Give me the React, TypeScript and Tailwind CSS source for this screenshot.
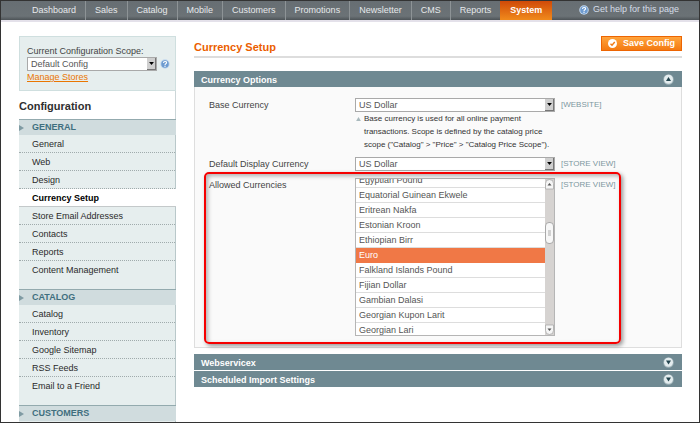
import { useEffect, useRef, type ReactNode } from "react";

const tabs = ["Dashboard", "Sales", "Catalog", "Mobile", "Customers", "Promotions", "Newsletter", "CMS", "Reports"];

const sections = [
  {
    title: "GENERAL",
    items: ["General", "Web", "Design", "Currency Setup", "Store Email Addresses", "Contacts", "Reports", "Content Management"],
  },
  { title: "CATALOG", items: ["Catalog", "Inventory", "Google Sitemap", "RSS Feeds", "Email to a Friend"] },
  { title: "CUSTOMERS", items: [] },
];

const currencies = [
  "Egyptian Pound",
  "Equatorial Guinean Ekwele",
  "Eritrean Nakfa",
  "Estonian Kroon",
  "Ethiopian Birr",
  "Euro",
  "Falkland Islands Pound",
  "Fijian Dollar",
  "Gambian Dalasi",
  "Georgian Kupon Larit",
  "Georgian Lari",
];

function HelpIcon() {
  return (
    <svg viewBox="0 0 20 20" className="size-[10px] shrink-0" aria-hidden="true">
      <circle cx="10" cy="10" r="9.5" fill="#c3d8ee" />
      <circle cx="10" cy="10" r="7.5" fill="#6e9bd0" />
      <path d="M7 8c0-4 6.200-4 6.200-.6 0 2.200-3.100 2.200-3.100 4.400" fill="none" stroke="#fff" strokeWidth="2.200" />
      <circle cx="10" cy="14.600" r="1.400" fill="#fff" />
    </svg>
  );
}

function ToggleIcon({ open }: { open?: boolean }) {
  return (
    <svg viewBox="0 0 22 22" className="size-[11px]" aria-hidden="true">
      <circle cx="11" cy="11" r="10.500" fill="#9fb3b9" />
      <circle cx="11" cy="10.500" r="9" fill="#e3ecee" />
      <path d={open ? "M11 6l5 8H6z" : "M11 15l5-8H6z"} fill="#23454f" />
    </svg>
  );
}

function DropDown({ id, value }: { id: string; value: string }) {
  return (
    <div className="relative min-w-0 flex-1">
      <select
        id={id}
        className="block h-[14px] w-full appearance-none border border-[#a9a9a9] bg-white pl-[3px] text-[9px] leading-[12px] text-[#555]"
      >
        <option>{value}</option>
      </select>
      <span className="pointer-events-none absolute inset-y-px right-px flex w-[9px] items-center justify-center border-r border-b border-[#777] bg-[#cfcfcf]">
        <svg viewBox="0 0 8 5" className="h-[3px] w-[5px]" aria-hidden="true">
          <path d="M0 0h8L4 5z" fill="#000" />
        </svg>
      </span>
    </div>
  );
}

function Row({ id, label, scope, children }: { id: string; label: string; scope: string; children: ReactNode }) {
  return (
    <div className="grid grid-cols-[146px_200px_1fr]">
      <label htmlFor={id} className="leading-[14px]">
        {label}
      </label>
      <div>{children}</div>
      <span className="pl-[6px] text-[8px] leading-[14px] text-[#7d979f]">[{scope}]</span>
    </div>
  );
}

function CurrencyList() {
  const list = useRef<HTMLSelectElement>(null);
  useEffect(() => {
    if (list.current) list.current.scrollTop = 6;
  }, []);
  return (
    <div className="flex border border-[#b5b5b5] bg-white">
      <select
        id="allowed"
        multiple
        size={10}
        ref={list}
        defaultValue={["Euro"]}
        className="block h-[156px] min-w-0 flex-1 appearance-none overflow-y-scroll border-0 bg-white p-0 text-[9px] text-[#555] outline-none [scrollbar-width:none]"
      >
        {currencies.map((name) => (
          <option
            key={name}
            className="h-[15px] min-h-[15px] border-b border-[#ddd] p-0 pt-[2px] pl-[3px] leading-[12px] checked:border-[#f07846] checked:bg-[linear-gradient(#f07846,#f07846)] checked:text-white"
          >
            {name}
          </option>
        ))}
      </select>
      <svg viewBox="0 0 9 156" className="h-[156px] w-[9px]" aria-hidden="true">
        <rect width="9" height="156" fill="#d6d3d1" />
        <path d="M.5 10V4.500a4 4 0 0 1 8 0V10z" fill="#f5f5f5" stroke="#aaa" strokeWidth=".8" />
        <path d="M2.500 6.500h4l-2-2.500z" fill="#555" />
        <rect x=".5" y="43.500" width="8" height="21" rx="3.500" fill="#f7f7f7" stroke="#999" strokeWidth=".8" />
        <path d="M3 52h3M3 54h3M3 56h3" stroke="#999" strokeWidth=".8" />
        <path d="M.5 146v5.500a4 4 0 0 0 8 0V146z" fill="#f5f5f5" stroke="#aaa" strokeWidth=".8" />
        <path d="M2.500 149.500h4l-2 2.500z" fill="#555" />
      </svg>
    </div>
  );
}

function SectionBar({ title, open }: { title: string; open?: boolean }) {
  return (
    <button
      type="button"
      aria-expanded={!!open}
      className="flex h-4 w-full items-center justify-between bg-[#6f8992] pr-2 pl-[7px] text-[9px] font-bold text-white"
    >
      <span className="pt-[2px] leading-[14px]">{title}</span>
      <ToggleIcon open={open} />
    </button>
  );
}

export default function App() {
  return (
    <div className="flex h-screen flex-col overflow-hidden border border-[#333] bg-white font-['Liberation_Sans',Arial,sans-serif] text-[9px] text-[#444]">
      <header className="flex h-[21px] shrink-0 items-stretch border-b-2 border-[#e4e1ea] bg-[linear-gradient(#676e73,#6b7276_80%,#4d5357)] pr-5 pl-[22px] text-[#e6e9eb]">
        <nav className="flex">
          {tabs.map((tab) => (
            <a key={tab} href="#" className="flex items-center border-r border-[#8d9396] px-[9px] last-of-type:border-0">
              {tab}
            </a>
          ))}
        </nav>
        <a href="#" className="flex items-center bg-[linear-gradient(#d04a08,#f08a1c)] px-[10px] font-bold text-white">
          System
        </a>
        <a href="#" className="ml-auto flex items-center gap-1 pb-[2px] text-[#d5dde8]">
          <HelpIcon />
          Get help for this page
        </a>
      </header>

      <div className="flex min-h-0 flex-1 pr-[17px] pl-[18px]">
        <aside className="w-[157px] shrink-0 pt-[14px]">
          <div className="h-[55px] border border-[#cfdfdf] bg-[#e6eeee] pt-2 pl-[7px]">
            <label htmlFor="scope" className="block leading-[12px]">
              Current Configuration Scope:
            </label>
            <div className="flex items-center gap-[3px] pr-[5px]">
              <DropDown id="scope" value="Default Config" />
              <HelpIcon />
            </div>
            <a href="#" className="block leading-[12px] text-[#ea7601] underline">
              Manage Stores
            </a>
          </div>
          <h2 className="h-7 border-r border-[#ccd6d8] pt-2 text-[11px] leading-[14px] font-bold text-[#2f2f2f]">Configuration</h2>
          {sections.map((section) => (
            <section key={section.title} className="bg-[#e6eeee]">
              <h3 className="flex h-4 items-center border-t border-[#93aaae] bg-[#d0dcde] font-bold text-[#3f6f7e]">
                <svg viewBox="0 0 5 6" className="mr-2 h-[6px] w-[5px]" aria-hidden="true">
                  <path d="M0 0l5 3-5 3z" fill="#7f9ba3" />
                </svg>
                {section.title}
              </h3>
              <ul className="border-r border-[#b9c8ca] pb-[10px]">
                {section.items.map((item, i) => (
                  <li key={item}>
                    <a
                      href="#"
                      className={
                        item === "Currency Setup"
                          ? "-mr-px block h-[18px] border-b border-[#c4c9ca] bg-white pl-[13px] leading-[18px] font-bold text-black"
                          : i === section.items.length - 1
                            ? "block h-[18px] pl-[13px] leading-[18px] text-[#2a2a2a]"
                            : "block h-[18px] border-b border-dotted border-[#a0abac] pl-[13px] leading-[18px] text-[#2a2a2a]"
                      }
                    >
                      {item}
                    </a>
                  </li>
                ))}
              </ul>
            </section>
          ))}
        </aside>

        <main className="ml-[18px] min-w-0 flex-1 pt-[14px]">
          <div className="mb-[13px] flex h-[22px] items-start justify-between border-b-2 border-[#ddd]">
            <h1 className="pt-1 text-[11px] leading-[14px] font-bold text-[#eb5e00]">Currency Setup</h1>
            <button
              type="button"
              className="flex h-[15px] items-center gap-[6px] border border-[#ed6502] bg-[linear-gradient(#ffa43c,#f47a12)] px-[6px] font-bold text-white"
            >
              <svg viewBox="0 0 18 18" className="size-[9px]" aria-hidden="true">
                <circle cx="9" cy="9" r="9" fill="#fff" />
                <path d="M5 9.500l3 3L13.500 6" fill="none" stroke="#f07a14" strokeWidth="2.800" />
              </svg>
              Save Config
            </button>
          </div>

          <SectionBar title="Currency Options" open />
          <div className="border border-t-0 border-[#dedede] bg-[#fafafa] px-[14px] pt-[11px] pb-[11px]">
            <Row id="base" label="Base Currency" scope="WEBSITE">
              <DropDown id="base" value="US Dollar" />
              <p className="flex pb-[6px] text-[8px] leading-[13px] whitespace-nowrap text-[#333]">
                <svg viewBox="0 0 6 5" className="mt-[5px] mr-[3px] ml-px h-[4px] w-[5px] shrink-0" aria-hidden="true">
                  <path d="M3 0l3 5H0z" fill="#a9b9bd" />
                </svg>
                <span>
                  Base currency is used for all online payment
                  <br />
                  transactions. Scope is defined by the catalog price
                  <br />
                  scope ("Catalog" &gt; "Price" &gt; "Catalog Price Scope").
                </span>
              </p>
            </Row>
            <Row id="display" label="Default Display Currency" scope="STORE VIEW">
              <DropDown id="display" value="US Dollar" />
            </Row>
            <div className="relative mt-[7px]">
              <Row id="allowed" label="Allowed Currencies" scope="STORE VIEW">
                <CurrencyList />
              </Row>
              <div className="pointer-events-none absolute -top-[6px] -bottom-[8px] -left-[5px] w-[417px] rounded-[5px] border-2 border-[#f50000] shadow-[2px_2px_4px_rgba(0,0,0,0.4),inset_2px_2px_4px_rgba(0,0,0,0.3)]" />
            </div>
          </div>

          <div className="mt-[6px] flex flex-col gap-px">
            <SectionBar title="Webservicex" />
            <SectionBar title="Scheduled Import Settings" />
          </div>
        </main>
      </div>
    </div>
  );
}
